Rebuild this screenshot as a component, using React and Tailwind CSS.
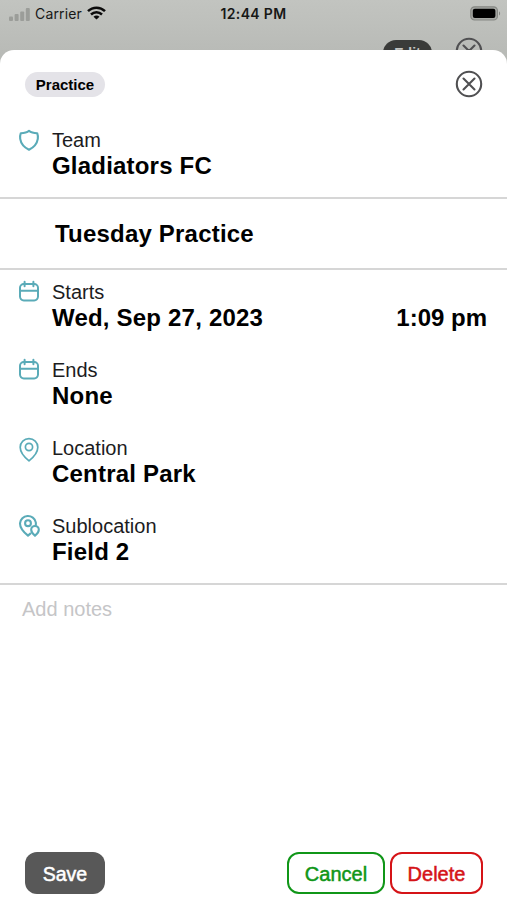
// Event details sheet
import React from "react";

const schedule = [
  { label: "Starts", value: "Wed, Sep 27, 2023", time: "1:09 pm", icon: CalendarIcon },
  { label: "Ends", value: "None", icon: CalendarIcon },
  { label: "Location", value: "Central Park", icon: PinIcon },
  { label: "Sublocation", value: "Field 2", icon: PinsIcon },
];

function ShieldIcon() {
  return (
    <svg className="mt-[2px]" width="22" height="24" viewBox="0 0 22 24" fill="none" stroke="#5aabb8" strokeWidth="2.1" strokeLinejoin="round">
      <path d="M11 1.8C9.2 3.4 6 4.2 2.8 4.2C2 6.4 1.9 8 2.2 9.8C3 15 6.4 18.4 11 20.8C15.6 18.4 19 15 19.8 9.8C20.1 8 20 6.4 19.2 4.2C16 4.2 12.8 3.4 11 1.8Z" />
    </svg>
  );
}

function CalendarIcon() {
  return (
    <svg className="mt-px" width="22" height="24" viewBox="0 0 22 24" fill="none" stroke="#5aabb8" strokeWidth="2" strokeLinecap="round">
      <rect x="2" y="4" width="18" height="16.4" rx="3.8" />
      <path d="M2 10.8H20M6.6 1.8V6.2M15.4 1.8V6.2" />
    </svg>
  );
}

function PinIcon() {
  return (
    <svg className="mt-[2px]" width="22" height="26" viewBox="0 0 22 26" fill="none" stroke="#5aabb8" strokeWidth="1.7" strokeLinejoin="round">
      <path d="M11 23.8C6.5 20.2 2.2 15.6 2.2 10.2A8.8 8.6 0 0 1 19.8 10.2C19.8 15.6 15.5 20.2 11 23.8Z" />
      <circle cx="11" cy="10" r="3.6" />
    </svg>
  );
}

function PinsIcon() {
  return (
    <svg className="mt-px" width="22" height="24" viewBox="0 0 22 24" fill="none" stroke="#5aabb8" strokeWidth="2.1" strokeLinejoin="round">
      <path d="M13 19C12 20 11 20.8 10 21.6C5.6 18 2 14 2 9.4A8 8 0 0 1 17.8 8.4C18 9.4 18 10.6 17.6 11.8" />
      <circle cx="10" cy="9.2" r="2.9" />
      <path d="M17 21.8C14.8 20 13.2 18.4 13.2 15.8A3.8 3.8 0 0 1 20.8 15.8C20.8 18.4 19.2 20 17 21.8Z" />
    </svg>
  );
}

function CloseIcon() {
  return (
    <svg width="28" height="28" viewBox="0 0 28 28" fill="none" stroke="#505052" strokeWidth="2.1" strokeLinecap="round">
      <circle cx="14" cy="14" r="12.2" />
      <path d="M8.5 8.5L19.5 19.5M19.5 8.5L8.5 19.5" />
    </svg>
  );
}

function StatusBar() {
  return (
    <div className="relative h-7 flex items-center justify-between pl-[9px] pr-[6px] font-[Inter,sans-serif] text-[#171817]">
      <div className="flex items-center">
        <svg width="21" height="13" viewBox="0 0 21 13" fill="#9b9d99">
          <rect x="0" y="8.5" width="4" height="4.5" rx="1" />
          <rect x="5.6" y="6" width="4" height="7" rx="1" />
          <rect x="11.2" y="3.5" width="4" height="9.5" rx="1" />
          <rect x="16.8" y="0" width="4" height="13" rx="1" />
        </svg>
        <span className="ml-[5px] w-[52px] text-[14px] leading-7 tracking-[0.15px]">Carrier</span>
        <svg className="-mt-[2px]" width="19" height="14" viewBox="0 0 19 14" fill="none" stroke="#0b0b0b" strokeWidth="2.5">
          <path d="M1 5.2C5.8 0.5 13.2 0.5 18 5.2" />
          <path d="M4 8.5C7.2 5.5 11.8 5.5 15 8.5" />
          <path d="M9.5 13.6L6.5 10.7C8.2 9.2 10.8 9.2 12.5 10.7Z" fill="#0b0b0b" stroke="none" />
        </svg>
      </div>
      <span className="absolute inset-x-0 text-center text-[14px] leading-7 font-semibold tracking-[0.35px]">12:44 PM</span>
      <svg className="-mt-[2px]" width="31" height="15" viewBox="0 0 31 15">
        <rect x="0.8" y="0.8" width="26.6" height="13.2" rx="3.8" fill="#a6a8a4" stroke="#858783" strokeWidth="1.2" />
        <rect x="2.8" y="2.8" width="22.6" height="9.2" rx="2" fill="#000" />
        <path d="M29 5.2C30.5 5.9 30.5 8.9 29 9.6Z" fill="#858783" />
      </svg>
    </div>
  );
}

function Field({ label, value, time, icon: Icon }) {
  return (
    <div className="flex items-start pl-[18px] pr-5">
      <div className="w-[34px] shrink-0">
        <Icon />
      </div>
      <div className="flex-1">
        <div className="text-[20px] leading-[26px] text-[#1c1c1e]">{label}</div>
        <div className="flex justify-between text-[24px] leading-[26px] font-bold tracking-[0.2px]">
          <span>{value}</span>
          {time && <span className="tracking-normal">{time}</span>}
        </div>
      </div>
    </div>
  );
}

export default function App() {
  return (
    <div className="h-[900px] w-[507px] overflow-hidden flex flex-col bg-linear-to-b from-[#c2c4c0] from-0% to-[#b5b7b3] to-8% font-['Liberation_Sans',Arial,sans-serif] text-black">
      <StatusBar />

      {/* Top of the page behind the sheet */}
      <div className="h-[22px] overflow-hidden flex justify-end items-start pr-6">
        <div className="mt-3 mr-[23px] w-[49px] h-[26px] rounded-full bg-[#3a3b39] text-center text-[14px] leading-[26px] font-bold text-[#c4c5c2]">
          Edit
        </div>
        <div className="mt-[9px]">
          <CloseIcon />
        </div>
      </div>

      <div className="flex-1 flex flex-col rounded-t-[14px] bg-white">
        <div className="h-[77px] shrink-0 flex items-start justify-between pl-[25px] pr-6">
          <span className="mt-[22px] h-[25px] w-20 rounded-full bg-[#e4e3e8] text-center text-[15px] leading-[25px] font-bold">
            Practice
          </span>
          <button className="mt-[19.5px]">
            <CloseIcon />
          </button>
        </div>

        <div className="pb-[18px] border-b-2 border-[#d6d6d6]">
          <Field label="Team" value="Gladiators FC" icon={ShieldIcon} />
        </div>

        <div className="h-[71px] pl-[55px] border-b-2 border-[#d6d6d6] text-[24px] leading-[70px] font-bold tracking-[0.2px]">
          Tuesday Practice
        </div>

        <div className="flex flex-col gap-[26px] pt-[9px] pb-[18px] border-b-2 border-[#d6d6d6]">
          {schedule.map((item) => (
            <Field key={item.label} {...item} />
          ))}
        </div>

        <div className="flex-1 pt-[11px] pl-[22px] text-[20px] leading-[26px] text-[#c5c5c7]">Add notes</div>

        <div className="flex items-center pl-[25px] pr-6 pb-[6px] text-[20px] leading-[42px] [-webkit-text-stroke:0.5px]">
          <button className="w-20 h-[42px] rounded-xl bg-[#585858] pt-px text-[19.5px] text-white">Save</button>
          <button className="ml-auto w-[98px] h-[42px] rounded-xl border-2 border-[#109618] pt-px leading-[38px] text-[#109618]">Cancel</button>
          <button className="ml-[5px] w-[93px] h-[42px] rounded-xl border-2 border-[#d51317] pt-px leading-[38px] text-[#d51317]">Delete</button>
        </div>
      </div>
    </div>
  );
}
